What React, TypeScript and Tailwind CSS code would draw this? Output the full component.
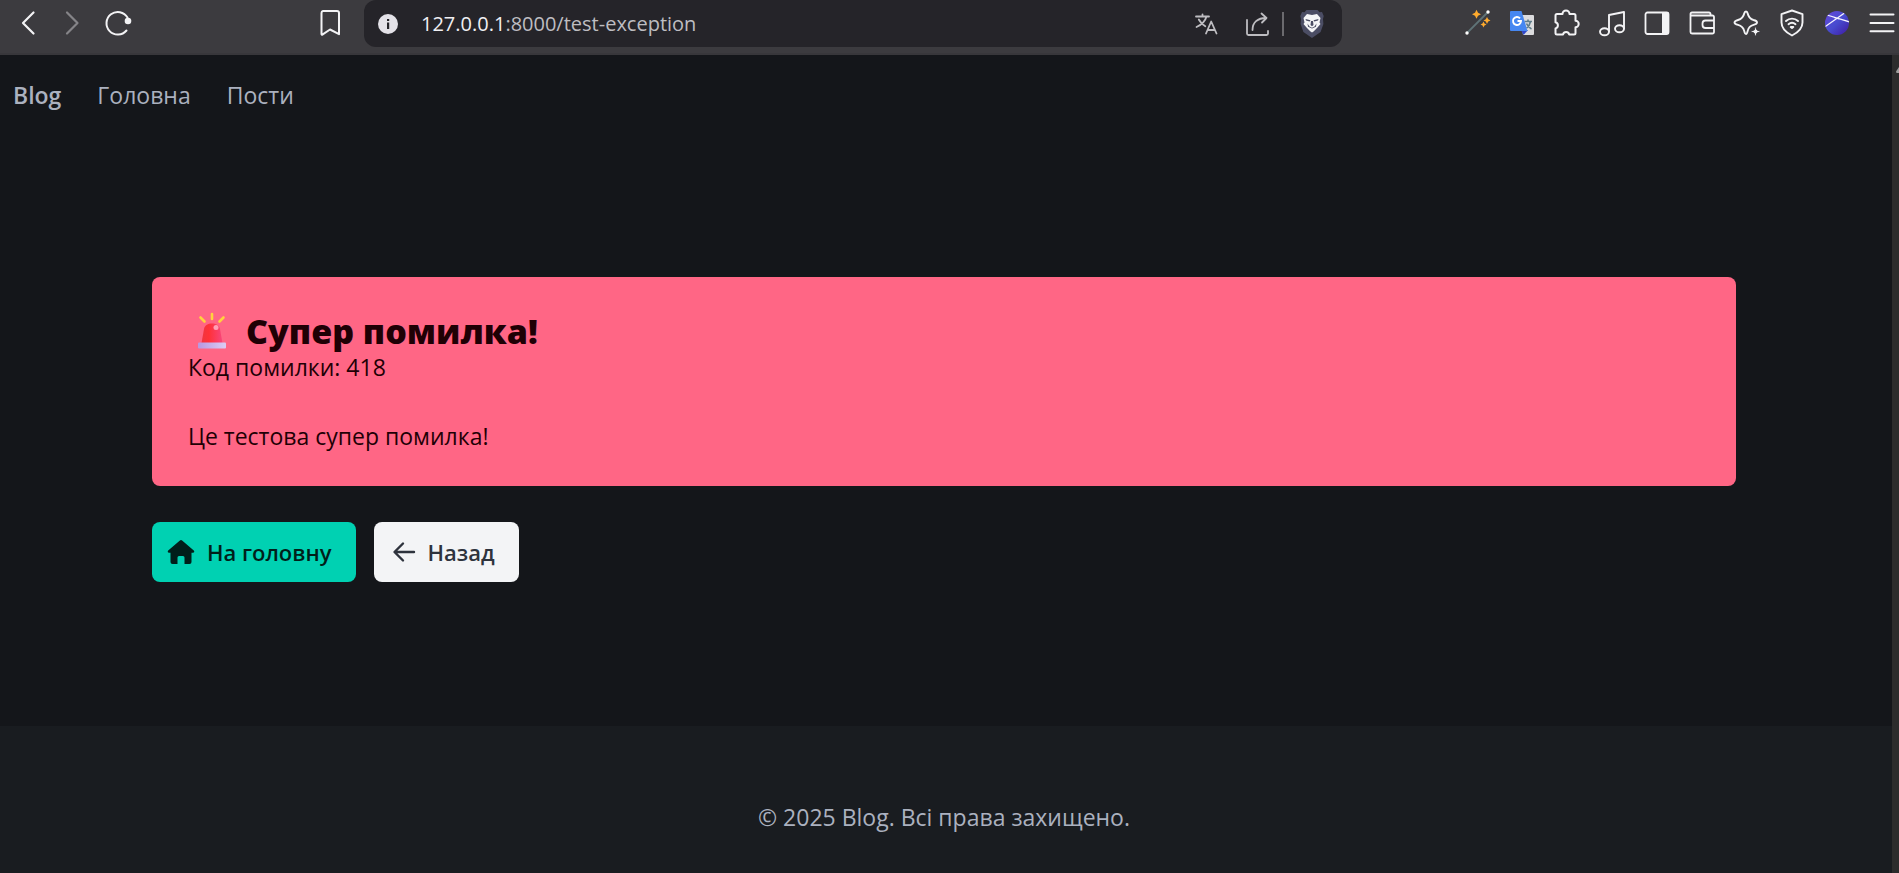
import React from 'react';

const stroke = {
  fill: 'none',
  stroke: 'currentColor',
  strokeLinecap: 'round' as const,
  strokeLinejoin: 'round' as const,
};

function ToolButton({ label, className = '', children }: { label: string; className?: string; children: React.ReactNode }) {
  return (
    <button type="button" aria-label={label} className={`flex shrink-0 items-center justify-center ${className}`}>
      {children}
    </button>
  );
}

const BackIcon = () => (
  <svg width="28" height="28" viewBox="0 0 28 28" {...stroke} strokeWidth="2.2"><path d="M19.500 3.500 9 14l10.500 10.500" /></svg>
);
const ForwardIcon = () => (
  <svg width="28" height="28" viewBox="0 0 28 28" {...stroke} strokeWidth="2.2"><path d="M8 3.500 18.500 14 8 24.500" /></svg>
);
const ReloadIcon = () => (
  <svg width="28" height="28" viewBox="0 0 28 28" {...stroke} strokeWidth="2">
    <path d="M22.500 21.500A11.300 11.300 0 1 1 23.500 8.500" />
    <circle cx="24" cy="12" r="3.300" fill="currentColor" stroke="none" />
  </svg>
);
const BookmarkIcon = () => (
  <svg width="28" height="28" viewBox="0 0 28 28" {...stroke} strokeWidth="2">
    <path d="M7 2h14a2 2 0 0 1 2 2v21.200L14 20.500 6 25.800 5.500 25.200V4A2 2 0 0 1 7 2Z" />
  </svg>
);
const InfoIcon = () => (
  <svg width="20" height="20" viewBox="0 0 20 20">
    <circle cx="10" cy="10" r="10" fill="#e4e2e8" />
    <path d="M9 8.500h2.200V15H9zM9 5h2.200v2H9z" fill="#252429" />
  </svg>
);
const TranslateIcon = () => (
  <svg width="24" height="24" viewBox="0 0 24 24" {...stroke} strokeWidth="1.800">
    <path d="M2 4.500h13M8.500 2.500v2M12.500 4.500C11.300 9 7.500 12.800 2.500 15M4.800 7.500c1.500 3 3.600 5 6.500 6.700M12 21.500 17.200 9.500 22.500 21.500M13.600 18h7.300" />
  </svg>
);
const ShareIcon = () => (
  <svg width="26" height="26" viewBox="0 0 26 26" {...stroke} strokeWidth="1.800">
    <path d="M2 9v13.500A1.500 1.500 0 0 0 3.500 24h18a1.500 1.500 0 0 0 1.500-1.500V20M7.500 19C7.500 11.500 12.500 7 21 7M16.500 2.500 21.500 7 17 11.500" />
  </svg>
);
const LionIcon = () => (
  <svg width="26" height="30" viewBox="0 0 26 30">
    <path d="M7.500 1h11l2 2.300 2.500-.3 1.700 4-.7 3 .4 5-2.800 8L13 29 4.400 23 1.600 15l.4-5-.7-3L3 3l2.500.3z" fill="#4b4d64" />
    <path d="m8 5 5 1 5-1 3.500 4-1 4.500 1 1.500-3.500 4-3.500 3.500-1.500 1-1.500-1L8 19l-3.500-4 1-1.500-1-4.500z" fill="#f5f5f7" />
    <path d="m6.500 10 5 1.200-.8 1.300-3.700-1zm13 0-5 1.200.8 1.300 3.700-1zM12 12h2l.5 4-1.500 1.300-1.500-1.300zM8.500 14.500l2 3 2.500 1.300 2.500-1.300 2-3-.5 3.200-4 1.800-4-1.800z" fill="#4b4d64" />
  </svg>
);
const WandIcon = () => (
  <svg width="28" height="28" viewBox="0 0 28 28">
    <path d="M4 24 25 3" stroke="#5f7377" strokeWidth="1.800" />
    <circle cx="4" cy="24" r="1.700" fill="#fff" />
    <circle cx="25" cy="3" r="1.700" fill="#fff" />
    <path d="m13.500.8 1.500 3L18 5.200l-3 1.500-1.500 3-1.500-3-3-1.500 3-1.400zM24 8l1.200 2.200 2.300 1.200-2.300 1.200L24 15l-1.200-2.400-2.300-1.200 2.300-1.200zM20.500 12.500l1 2 2 1-2 1-1 2-1-2-2-1 2-1z" fill="#ffab2e" />
  </svg>
);
const GTranslateIcon = () => (
  <svg width="26" height="26" viewBox="0 0 26 26">
    <path d="M11 5h13a1 1 0 0 1 1 1v18a1 1 0 0 1-1 1H14z" fill="#dcdcde" />
    <path d="M12 20h7l-4.500 5z" fill="#3047c9" />
    <path d="M15.500 11.500H23M19 9.500v2M21.500 11.500c-.5 3-2 5-4 6.500M17.500 13.500c1 2.500 3 4.500 5 5.500" fill="none" stroke="#607d8b" strokeWidth="1.600" />
    <path d="M2 1h10.500l6 20H2a1 1 0 0 1-1-1V2a1 1 0 0 1 1-1z" fill="#4687f1" />
    <path d="M11 8.300A4 4 0 1 0 12 11H8.500" fill="none" stroke="#fff" strokeWidth="1.900" />
  </svg>
);
const PuzzleIcon = () => (
  <svg width="28" height="28" viewBox="0 0 28 28" {...stroke} strokeWidth="2">
    <path d="M5 5H9.500a3.500 3.500 0 0 1 7 0h4.500a1.500 1.500 0 0 1 1.500 1.500v5.300a3.200 3.200 0 0 1 0 6.400v5.800a1.500 1.500 0 0 1-1.500 1.500h-4.800a3.200 3.200 0 0 0-6.200 0H4A1.500 1.500 0 0 1 2.500 24v-4.600a3.200 3.200 0 0 0 0-6.200V6.500A1.500 1.500 0 0 1 4 5Z" />
  </svg>
);
const MusicIcon = () => (
  <svg width="28" height="28" viewBox="0 0 28 28" {...stroke} strokeWidth="1.900">
    <ellipse cx="6.500" cy="22.800" rx="4.500" ry="3.500" /><ellipse cx="21.500" cy="19.800" rx="4.500" ry="3.500" />
    <path d="M11 22.500V6L26 3v16.500" />
  </svg>
);
const PanelIcon = () => (
  <svg width="26" height="26" viewBox="0 0 26 26">
    <rect x="1.500" y="2.500" width="23" height="21.500" rx="2" fill="none" stroke="currentColor" strokeWidth="1.800" />
    <path d="M18 2h5.500a1.500 1.500 0 0 1 1.500 1.500v19a1.500 1.500 0 0 1-1.500 1.500H18z" fill="currentColor" />
  </svg>
);
const WalletIcon = () => (
  <svg width="26" height="26" viewBox="0 0 26 26" {...stroke} strokeWidth="1.800">
    <path d="M21.500 5.500V4A1.500 1.500 0 0 0 20 2.500H3A1.500 1.500 0 0 0 1.500 4v18A1.500 1.500 0 0 0 3 23.500h20.500A1.500 1.500 0 0 0 25 22V7a1.500 1.500 0 0 0-1.500-1.500H1.500M25 10.500h-8.500a3 3 0 0 0-3 3v1.500a3 3 0 0 0 3 3H25" />
  </svg>
);
const SparkIcon = () => (
  <svg width="28" height="28" viewBox="0 0 28 28" {...stroke} strokeWidth="1.900">
    <path d="M13 2.500c1 0 1.400.7 1.700 2 .9 4 2.300 5.500 5.800 6.500 2 .5 3.500 1 3.500 2.400s-1 1.900-3.500 2.500c-3.500.9-4.900 2.300-5.800 6-.4 1.700-.7 3.100-1.700 3.100s-1.400-1.300-1.800-3.100c-.9-3.700-2.600-5.100-6.200-6-2-.5-3.500-1-3.500-2.400S3 11.600 5 11c3.600-1 5.300-2.500 6.200-6.500.3-1.300.8-2 1.800-2Z" />
    <path d="m22.500 17 1.500 4 4 1.500-4 1.500-1.500 4-1.500-4-4-1.500 4-1.500z" fill="currentColor" stroke="#3c3b3f" strokeWidth="1" />
  </svg>
);
const VpnIcon = () => (
  <svg width="28" height="28" viewBox="0 0 28 28" {...stroke} strokeWidth="1.900">
    <path d="m14 1.500 10.500 3.700v8.300c0 6-4.500 10-10.500 13-6-3-10.500-7-10.500-13V5.200Z" />
    <path d="M8 12c3.300-3.200 8.700-3.200 12 0M10.500 15.200c2-1.700 5-1.700 7 0" />
    <path d="M12.700 18h2.600L14 19z" fill="currentColor" />
  </svg>
);
const OrbIcon = () => (
  <svg width="26" height="26" viewBox="0 0 26 26">
    <defs>
      <linearGradient id="orb" x1="0" y1="0" x2="1" y2="1"><stop offset="0" stopColor="#6747d8" /><stop offset=".5" stopColor="#474bcf" /><stop offset="1" stopColor="#4019a0" /></linearGradient>
      <clipPath id="orbClip"><circle cx="13" cy="13" r="12" /></clipPath>
    </defs>
    <circle cx="13" cy="13" r="12" fill="url(#orb)" />
    <g clipPath="url(#orbClip)" stroke="#f4f2ff" strokeWidth="1.300"><path d="M3 5 26 12M0 17.500 20.500 3M10 7.500l5 1.500" /></g>
  </svg>
);
const MenuIcon = () => (
  <svg width="28" height="28" viewBox="0 0 28 28" {...stroke} strokeWidth="2"><path d="M2.500 5.500h23M2.500 14h23M2.500 22.300h23" /></svg>
);
const SirenIcon = () => (
  <svg width="36" height="38" viewBox="0 0 36 38" aria-hidden="true">
    <defs>
      <linearGradient id="dome"><stop offset="0" stopColor="#ef3540" /><stop offset=".35" stopColor="#ff3138" /><stop offset="1" stopColor="#f8467c" /></linearGradient>
      <linearGradient id="base"><stop offset="0" stopColor="#b897e0" /><stop offset="1" stopColor="#dccdf4" /></linearGradient>
    </defs>
    <path d="M18 2v5M6.500 5.500l4 4M29.500 5.500l-4 4" stroke="#ffd23e" strokeWidth="2.600" strokeLinecap="round" />
    <path d="M7.500 31 10 17c.8-4 4-5.500 8-5.500s7.200 1.500 8 5.500l2.500 14z" fill="url(#dome)" />
    <circle cx="22" cy="15.500" r="2.500" fill="#ffa0b4" />
    <rect x="4" y="30.500" width="28" height="6" rx="1" fill="url(#base)" />
  </svg>
);
const HomeIcon = () => (
  <svg width="28" height="26" viewBox="0 0 28 26" fill="currentColor" aria-hidden="true">
    <path d="M12.900 1.400a1.700 1.700 0 0 1 2.200 0L26.800 11.600c.9.900.4 2.200-.8 2.200h-1.500V23a2 2 0 0 1-2 2h-5V18.500a1.500 1.500 0 0 0-1.500-1.500h-4a1.500 1.500 0 0 0-1.500 1.500V25h-5a2 2 0 0 1-2-2v-9.200H2c-1.200 0-1.700-1.300-.8-2.200z" />
  </svg>
);
const ArrowIcon = () => (
  <svg width="24" height="24" viewBox="0 0 24 24" {...stroke} strokeWidth="2.400" aria-hidden="true"><path d="M22 12H3M11 3.500 2.500 12l8.500 8.500" /></svg>
);

export default function App() {
  return (
    <div className="flex min-h-screen flex-col bg-[#14161a] font-['Open_Sans','Noto_Sans',sans-serif] text-[23px] leading-9 text-[#abb1bf]">
      <header className="flex h-[55px] items-start border-b-2 border-[#38373b] bg-[#3c3b3f] text-[#f3f3f5]">
        <div className="flex h-[46px] w-[364px] shrink-0 items-center pr-[18px] pl-3">
          <ToolButton label="Back" className="size-8"><BackIcon /></ToolButton>
          <ToolButton label="Forward" className="ml-[13px] size-8 text-[#858488]"><ForwardIcon /></ToolButton>
          <ToolButton label="Reload" className="ml-[13px] size-8"><ReloadIcon /></ToolButton>
          <ToolButton label="Bookmark" className="ml-auto size-8"><BookmarkIcon /></ToolButton>
        </div>
        <div className="flex h-[47px] min-w-0 flex-1 items-center rounded-xl bg-[#252429] pr-[14px] pl-[14px] text-[#bebdc1]">
          <ToolButton label="Site information" className="size-5"><InfoIcon /></ToolButton>
          <span className="ml-[23px] flex-1 truncate text-[20px] leading-7"><span className="text-[#f0eff3]">127.0.0.1</span>:8000/test-exception</span>
          <ToolButton label="Translate" className="size-7"><TranslateIcon /></ToolButton>
          <ToolButton label="Share" className="ml-6 size-7"><ShareIcon /></ToolButton>
          <span className="ml-[10px] h-6 w-0.5 bg-[#6b6a6e]" />
          <ToolButton label="Shields" className="ml-3 h-8 w-8"><LionIcon /></ToolButton>
        </div>
        <div className="flex h-[46px] w-[557px] shrink-0 items-center justify-end gap-[13px] pr-px">
          <ToolButton label="Magic wand" className="size-8"><WandIcon /></ToolButton>
          <ToolButton label="Google Translate" className="size-8"><GTranslateIcon /></ToolButton>
          <ToolButton label="Extensions" className="size-8"><PuzzleIcon /></ToolButton>
          <ToolButton label="Music" className="size-8"><MusicIcon /></ToolButton>
          <ToolButton label="Sidebar" className="size-8"><PanelIcon /></ToolButton>
          <ToolButton label="Wallet" className="size-8"><WalletIcon /></ToolButton>
          <ToolButton label="Assistant" className="size-8"><SparkIcon /></ToolButton>
          <ToolButton label="VPN" className="size-8"><VpnIcon /></ToolButton>
          <ToolButton label="Profile" className="size-8"><OrbIcon /></ToolButton>
          <ToolButton label="Menu" className="size-8"><MenuIcon /></ToolButton>
        </div>
      </header>

      <div className="flex flex-1">
        <div className="flex min-w-0 flex-1 flex-col">
          <nav className="flex h-20 items-center gap-9 px-[13px]">
            <a href="#blog" className="font-semibold">Blog</a>
            <a href="#home">Головна</a>
            <a href="#posts">Пости</a>
          </nav>

          <main className="flex-1 pt-[142px] pr-[156px] pl-[152px]">
            <section className="rounded-lg bg-[#ff6685] px-9 pt-9 pb-8 text-[#1f0005]">
              <h1 className="flex h-9 items-center gap-4 pl-1.5 text-[34px] leading-9 font-extrabold">
                <SirenIcon />
                Супер помилка!
              </h1>
              <p>Код помилки: 418</p>
              <p className="pt-[33px]">Це тестова супер помилка!</p>
            </section>
            <div className="flex gap-[18px] pt-9 text-[22px] font-semibold">
              <a href="#home" className="flex h-[60px] items-center gap-3 rounded-lg bg-[#00d1b2] pr-6 pl-[15px] text-[#001f1a]">
                <HomeIcon />
                На головну
              </a>
              <button type="button" className="flex h-[60px] items-center gap-3 rounded-lg bg-[#f3f4f6] pr-6 pl-[18px] text-[#2e333d]">
                <ArrowIcon />
                Назад
              </button>
            </div>
          </main>

          <footer className="h-[147px] bg-[#191c20] pt-[73px] pr-1 text-center">© 2025 Blog. Всі права захищено.</footer>
        </div>
        <div className="w-[7px] shrink-0 bg-[#2c2c2c] pt-3">
          <svg width="7" height="7" viewBox="0 0 7 7"><path d="M7 0v6H4.500L4 4.500z" fill="#9f9f9f" /></svg>
        </div>
      </div>
    </div>
  );
}
